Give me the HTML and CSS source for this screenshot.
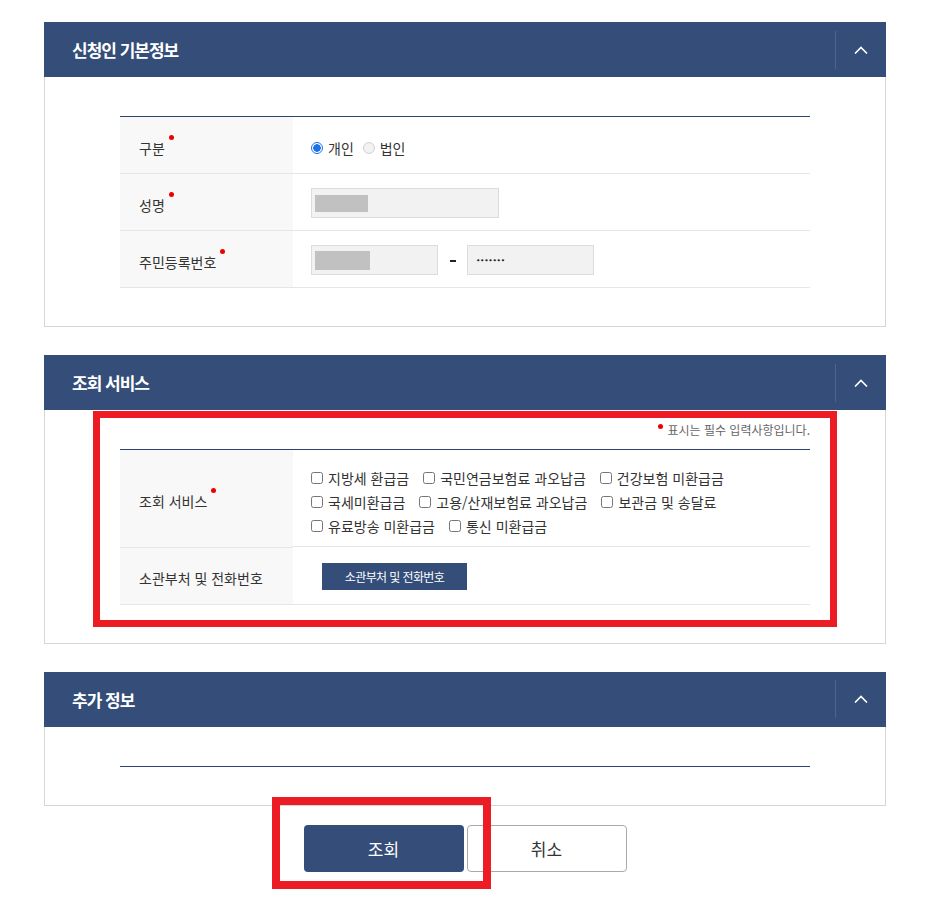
FILE: index.html
```html
<!DOCTYPE html>
<html lang="ko">

<head>
    <meta charset="UTF-8">
    <meta name="viewport" content="width=device-width, initial-scale=1.0">
    <title>미환급금 조회 신청</title>
    <link rel="stylesheet" href="styles.css">
</head>

<body>
    <div class="page">
        <section class="panel">
            <div class="panel-head">
                <h2>신청인 기본정보</h2>
                <button class="toggle" type="button" aria-label="접기">
                    <svg width="14" height="8" viewBox="0 0 14 8"><polyline points="1,7.5 7,1.5 13,7.5" fill="none" stroke="#fff" stroke-width="1.6"/></svg>
                </button>
            </div>
            <div class="panel-body">
                <table class="form-table">
                    <tr>
                        <th>구분<span class="req"></span></th>
                        <td class="radios">
                            <label class="radio"><input type="radio" name="kind" checked>개인</label>
                            <label class="radio"><input type="radio" name="kind">법인</label>
                        </td>
                    </tr>
                    <tr>
                        <th>성명<span class="req"></span></th>
                        <td>
                            <div class="field field-name"><span class="mask"></span></div>
                        </td>
                    </tr>
                    <tr>
                        <th>주민등록번호<span class="req"></span></th>
                        <td>
                            <div class="id-row">
                                <div class="field field-id"><span class="mask mask-id"></span></div>
                                <span class="dash"></span>
                                <div class="field field-id"><span class="secret">•••••••</span></div>
                            </div>
                        </td>
                    </tr>
                </table>
            </div>
        </section>

        <section class="panel">
            <div class="panel-head">
                <h2>조회 서비스</h2>
                <button class="toggle" type="button" aria-label="접기">
                    <svg width="14" height="8" viewBox="0 0 14 8"><polyline points="1,7.5 7,1.5 13,7.5" fill="none" stroke="#fff" stroke-width="1.6"/></svg>
                </button>
            </div>
            <div class="panel-body panel-body-note">
                <p class="note"><span class="req"></span>표시는 필수 입력사항입니다.</p>
                <table class="form-table">
                    <tr>
                        <th>조회 서비스<span class="req"></span></th>
                        <td class="checks">
                            <label class="check"><input type="checkbox">지방세 환급금</label>
                            <label class="check"><input type="checkbox">국민연금보험료 과오납금</label>
                            <label class="check"><input type="checkbox">건강보험 미환급금</label>
                            <label class="check"><input type="checkbox">국세미환급금</label>
                            <label class="check"><input type="checkbox">고용/산재보험료 과오납금</label>
                            <label class="check"><input type="checkbox">보관금 및 송달료</label>
                            <label class="check"><input type="checkbox">유료방송 미환급금</label>
                            <label class="check"><input type="checkbox">통신 미환급금</label>
                        </td>
                    </tr>
                    <tr>
                        <th>소관부처 및 전화번호</th>
                        <td><button class="small-btn" type="button">소관부처 및 전화번호</button></td>
                    </tr>
                </table>
            </div>
        </section>

        <section class="panel">
            <div class="panel-head">
                <h2>추가 정보</h2>
                <button class="toggle" type="button" aria-label="접기">
                    <svg width="14" height="8" viewBox="0 0 14 8"><polyline points="1,7.5 7,1.5 13,7.5" fill="none" stroke="#fff" stroke-width="1.6"/></svg>
                </button>
            </div>
            <div class="panel-body">
                <div class="form-table empty"></div>
            </div>
        </section>

        <div class="actions">
            <button class="btn btn-primary" type="button">조회</button>
            <button class="btn btn-cancel" type="button">취소</button>
        </div>
    </div>

    <!-- 강조 표시 -->
    <div class="highlight highlight-service"></div>
    <div class="highlight highlight-submit"></div>
</body>

</html>
```

FILE: styles.css
```css
body {
    font-family: "Noto Sans CJK KR", "Noto Sans", sans-serif;
    background-color: #ffffff;
    color: #333;
    margin: 0;
}

.page {
    width: 842px;
    margin-left: 44px;
    padding-top: 22px;
}

.panel {
    margin-bottom: 28px;
}

.panel-head {
    display: flex;
    align-items: center;
    height: 55px;
    background-color: #344d79;
}

.panel-head h2 {
    flex: 1;
    margin: 0;
    padding-left: 28px;
    font-size: 17px;
    font-weight: 700;
    letter-spacing: -1px;
    color: #ffffff;
}

.toggle {
    width: 51px;
    height: 38px;
    padding: 0;
    border: none;
    border-left: 1px solid rgba(255, 255, 255, 0.13);
    background: none;
    display: flex;
    align-items: center;
    justify-content: center;
    cursor: pointer;
}

.panel-body {
    border: 1px solid #d6d6d6;
    border-top: none;
    padding: 39px 75px 38px;
}

.panel-body-note {
    padding-top: 11px;
}

.note {
    margin: 0 0 10px;
    text-align: right;
    font-size: 12px;
    line-height: 18px;
    color: #666;
}

.note .req {
    top: -6px;
    margin: 0 4px 0 0;
}

.form-table {
    width: 100%;
    border-collapse: collapse;
    border-top: 1px solid #2c4270;
}

.form-table.empty {
    height: 0;
}

.form-table th,
.form-table td {
    border-bottom: 1px solid #e6e6e6;
    height: 54px;
    padding: 2px 0 0;
    font-size: 14px;
    vertical-align: middle;
}

.form-table th {
    width: 154px;
    height: 51px;
    padding: 5px 0 0 19px;
    background-color: #f8f8f8;
    text-align: left;
    font-weight: 400;
}

.form-table td {
    padding-left: 18px;
}

.form-table td.radios {
    padding-top: 5px;
    height: 51px;
}

.req {
    display: inline-block;
    width: 5px;
    height: 5px;
    border-radius: 50%;
    background-color: #ee0000;
    margin-left: 4px;
    position: relative;
    top: -14px;
}

.radio {
    display: inline-flex;
    align-items: center;
    margin-right: 5px;
}

.radio input {
    appearance: none;
    width: 12px;
    height: 12px;
    margin: 0 5px 0 0;
    border: 1px solid #cfcfcf;
    border-radius: 50%;
    background-color: #f3f3f3;
}

.radio input:checked {
    border-color: #1a73e8;
    background: radial-gradient(circle, #1a73e8 3.5px, #ffffff 4px);
}

.field {
    box-sizing: border-box;
    height: 30px;
    border: 1px solid #dcdcdc;
    background-color: #f2f2f2;
    padding: 3px;
    display: flex;
    align-items: center;
}

.field-name {
    width: 188px;
}

.field-id {
    width: 127px;
}

.mask {
    width: 53px;
    height: 17px;
    background-color: #c1c1c1;
}

.mask-id {
    width: 55px;
    height: 19px;
}

.secret {
    padding-left: 5px;
    font-family: "DejaVu Sans", sans-serif;
    font-size: 7.5px;
    letter-spacing: -0.3px;
    color: #222;
}

.id-row {
    display: flex;
    align-items: center;
}

.dash {
    width: 6px;
    height: 2px;
    margin: 1px 11px 0 12px;
    background-color: #222;
}

.checks {
    display: flex;
    flex-wrap: wrap;
    column-gap: 14px;
}

.form-table td.checks {
    height: auto;
    padding: 16px 18px 8px;
}

.check {
    display: inline-flex;
    align-items: center;
    line-height: 24px;
}

.check input {
    width: 12px;
    height: 12px;
    margin: 0 5px 0 0;
}

.small-btn {
    height: 27px;
    width: 145px;
    margin-left: 11px;
    padding: 0;
    border: none;
    background-color: #344d79;
    color: #ffffff;
    font-family: inherit;
    font-size: 12px;
    letter-spacing: -0.6px;
    cursor: pointer;
}

.actions {
    display: flex;
    justify-content: center;
    gap: 3px;
    margin-top: -9px;
}

.btn {
    width: 160px;
    height: 47px;
    border-radius: 4px;
    font-family: inherit;
    font-size: 17px;
    cursor: pointer;
}

.btn-primary {
    border: none;
    background-color: #344d79;
    color: #ffffff;
}

.btn-cancel {
    border: 1px solid #aaaaaa;
    background-color: #ffffff;
    color: #333;
}

.highlight {
    position: absolute;
    border: 7px solid #ed1c24;
    pointer-events: none;
}

.highlight-service {
    left: 93px;
    top: 411px;
    width: 730px;
    height: 202px;
}

.highlight-submit {
    border-width: 8px;
    left: 272px;
    top: 797px;
    width: 203px;
    height: 76px;
}
```
